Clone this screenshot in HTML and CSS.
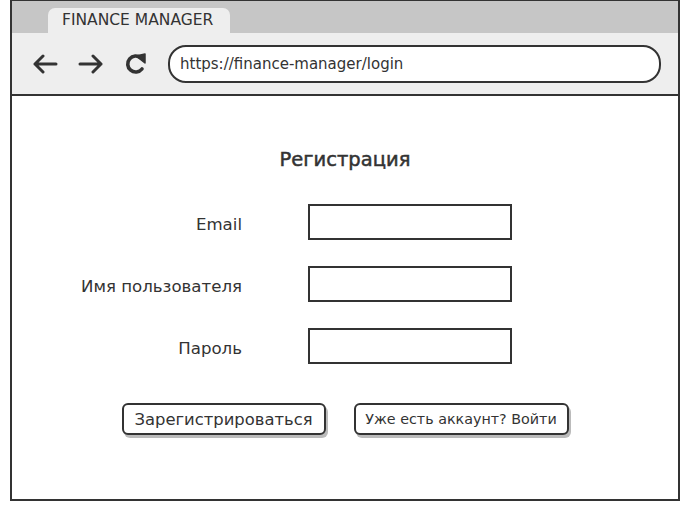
FILE: index.html
```html
<!DOCTYPE html>
<html lang="ru">
<head>
    <meta charset="UTF-8">
    <title>Finance Manager - Регистрация</title>
    <link rel="stylesheet" href="styles.css">
</head>
<body>

<div class="window">
    <div class="tabbar">
        <div class="tab">FINANCE MANAGER</div>
    </div>
    <div class="toolbar">
        <svg class="nav-icon" width="26" height="20" viewBox="0 0 26 20">
            <path d="M24 10 H3 M11 2 L3 10 L11 18" fill="none" stroke="#333" stroke-width="3" stroke-linecap="round" stroke-linejoin="round"/>
        </svg>
        <svg class="nav-icon" width="26" height="20" viewBox="0 0 26 20">
            <path d="M2 10 H23 M15 2 L23 10 L15 18" fill="none" stroke="#333" stroke-width="3" stroke-linecap="round" stroke-linejoin="round"/>
        </svg>
        <svg class="nav-icon" width="24" height="22" viewBox="0 0 24 22">
            <path d="M17 5 A8 8 0 1 0 18 16" fill="none" stroke="#333" stroke-width="3.6" stroke-linecap="round"/>
            <path d="M12 3 L21 1 L21 10 Z" fill="#333" stroke="#333" stroke-width="1.5" stroke-linejoin="round"/>
        </svg>
        <div class="url">https://finance-manager/login</div>
    </div>

    <div class="content">
        <h2>Регистрация</h2>
        <div class="form">
            <label for="email">Email</label>
            <input type="text" id="email">
            <label for="username">Имя пользователя</label>
            <input type="text" id="username">
            <label for="password">Пароль</label>
            <input type="password" id="password">
        </div>
        <div class="actions">
            <button class="btn btn-main">Зарегистрироваться</button>
            <button class="btn btn-small">Уже есть аккаунт? Войти</button>
        </div>
    </div>
</div>

</body>
</html>
```

FILE: styles.css
```css
body {
    margin: 0;
    font-family: "DejaVu Sans", sans-serif;
    color: #333;
    background-color: #fff;
}
.window {
    margin-left: 10px;
    width: 666px;
    height: 498px;
    border: 2px solid #333;
    border-top-width: 1px;
    display: flex;
    flex-direction: column;
}
.tabbar {
    height: 32px;
    background-color: #c6c6c6;
    display: flex;
    align-items: flex-end;
    padding-left: 36px;
}
.tab {
    width: 182px;
    height: 25px;
    background-color: #eee;
    border-radius: 7px 7px 0 0;
    font-size: 15.5px;
    line-height: 25px;
    padding-left: 14px;
    box-sizing: border-box;
}
.toolbar {
    height: 61px;
    background-color: #eee;
    border-bottom: 2px solid #333;
    display: flex;
    align-items: center;
    padding-left: 20px;
}
.nav-icon {
    margin-right: 20px;
}
.url {
    width: 479px;
    height: 34px;
    border: 2px solid #333;
    border-radius: 18px;
    background-color: #fff;
    font-size: 15px;
    line-height: 34px;
    padding-left: 10px;
}
.content {
    flex: 1;
    display: flex;
    flex-direction: column;
    align-items: center;
}
.content h2 {
    margin: 52px 0 32px;
    font-size: 19.5px;
    font-weight: normal;
    -webkit-text-stroke: 0.5px #333;
    line-height: 24px;
}
.form {
    display: grid;
    grid-template-columns: 230px 204px;
    column-gap: 66px;
    row-gap: 26px;
    align-items: center;
    align-self: flex-start;
}
.form label {
    text-align: right;
    font-size: 16.6px;
    padding-top: 5px;
}
.form input {
    height: 36px;
    border: 2px solid #333;
    box-sizing: border-box;
    margin: 0;
    padding: 0;
}
.actions {
    margin-top: 39px;
    display: flex;
    gap: 28px;
}
.btn {
    height: 32px;
    border: 2px solid #333;
    border-radius: 6px;
    background-color: #fff;
    color: #333;
    font-family: "DejaVu Sans", sans-serif;
    box-shadow: 2px 3px 0 #bbb;
    padding: 0;
}
.btn-main {
    width: 204px;
    font-size: 16.4px;
}
.btn-small {
    width: 215px;
    font-size: 14.3px;
}
```
